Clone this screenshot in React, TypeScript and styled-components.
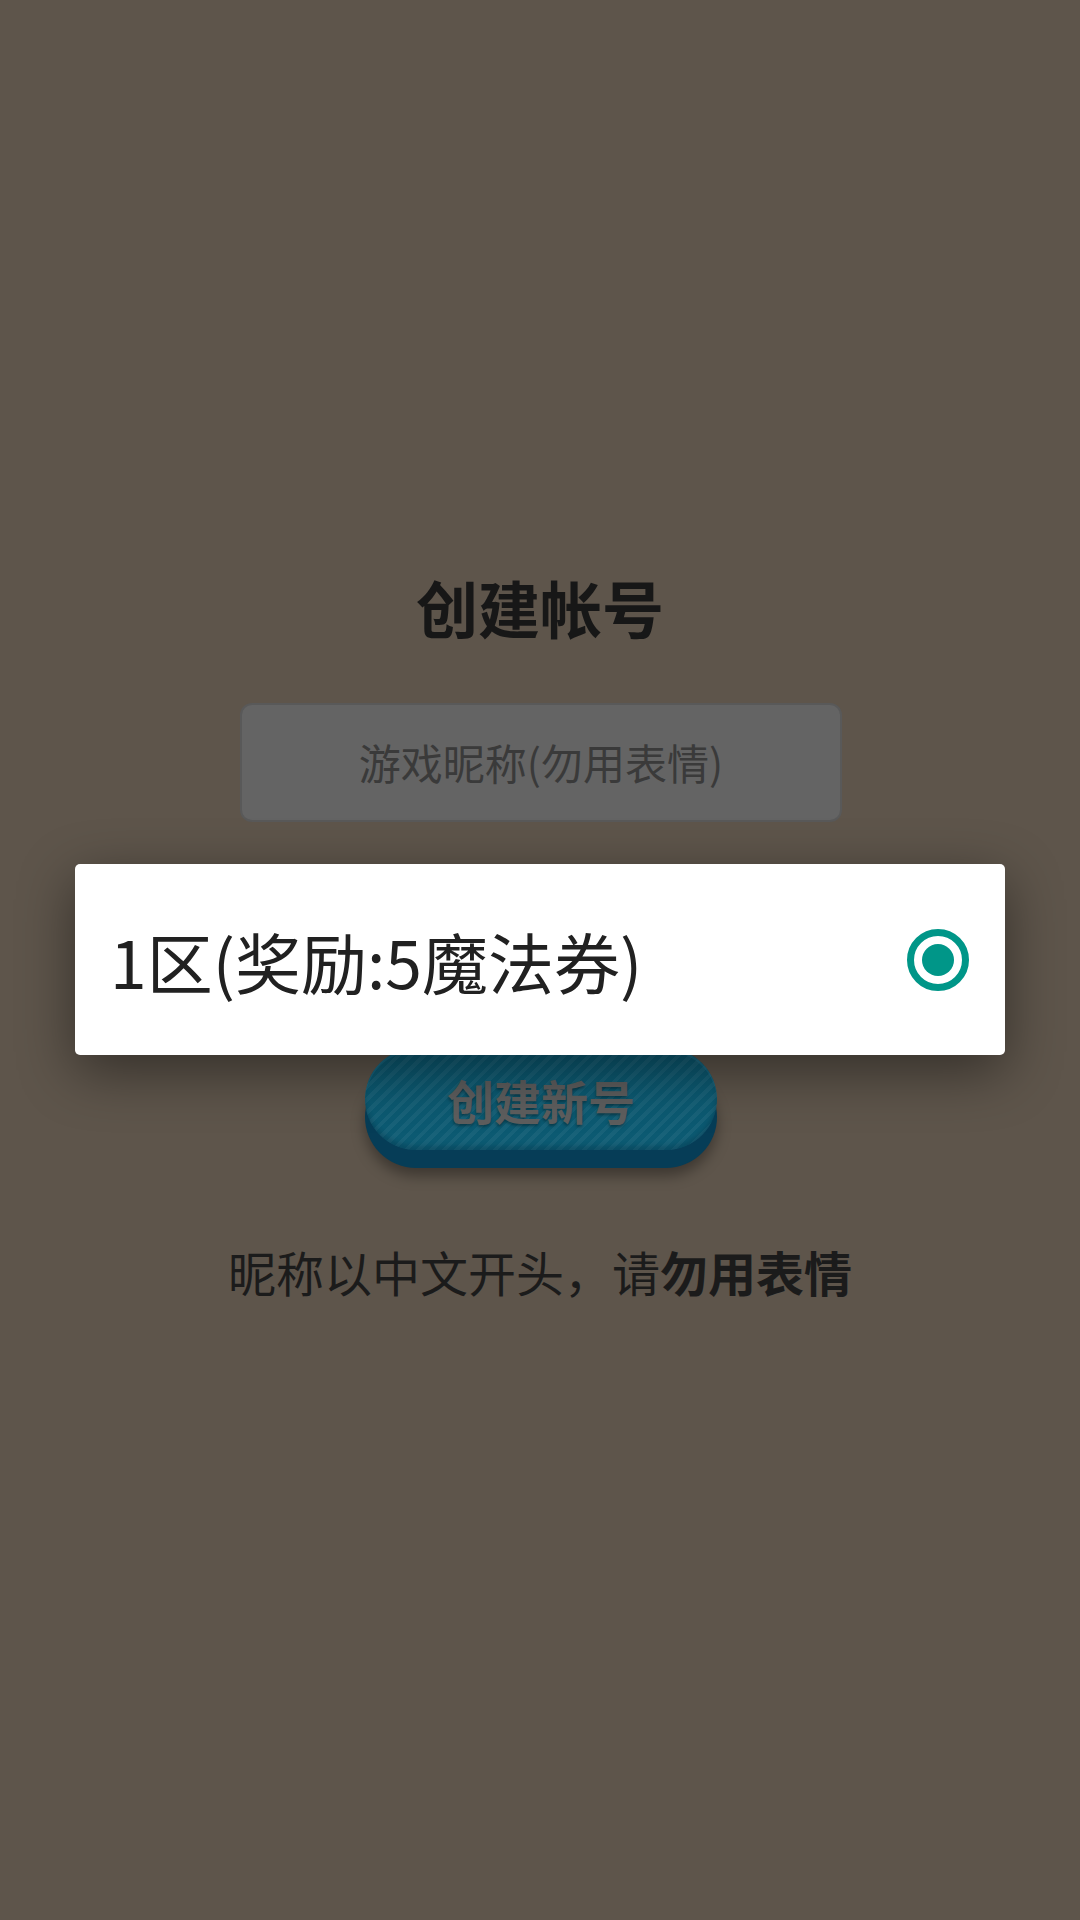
import React, { useState } from 'react'
import styled, { createGlobalStyle } from 'styled-components'

const GlobalStyle = createGlobalStyle`
    html, body {
        margin: 0;
        padding: 0;
        background: #5e554b;
    }
    * {
        box-sizing: border-box;
    }
`

const FONT = `"Noto Sans CJK SC", "Noto Sans", sans-serif`

const Page = styled.div`
    width: 1080px;
    min-height: 1920px;
    background: #5e554b;
    display: flex;
    flex-direction: column;
    align-items: center;
    padding-top: 570px;
    font-family: ${FONT};
`

const Title = styled.h1`
    margin: 0 0 59px;
    font-size: 62px;
    line-height: 74px;
    font-weight: 700;
    color: #171717;
`

const NameInput = styled.input`
    width: 602px;
    height: 119px;
    margin-left: 2px;
    border: 2px solid #595959;
    border-radius: 12px;
    background: #646464;
    font-family: ${FONT};
    font-size: 42px;
    text-align: center;
    color: #222;
    outline: none;
    padding-bottom: 4px;

    &::placeholder {
        color: #3a3a3a;
    }
`

const CreateButton = styled.button`
    margin-top: 226px;
    width: 352px;
    height: 102px;
    margin-left: 2px;
    border: none;
    border-radius: 51px;
    background-color: #0c5a72;
    background-image: repeating-linear-gradient(
        135deg,
        rgba(255, 255, 255, 0.05) 0 4px,
        rgba(0, 0, 0, 0) 4px 9px
    );
    box-shadow:
        inset 0 3px 0 rgba(40, 130, 160, 0.35),
        inset 0 -4px 4px rgba(0, 30, 50, 0.25),
        0 18px 0 #063d57,
        0 26px 14px rgba(0, 0, 0, 0.35);
    font-family: ${FONT};
    font-size: 47px;
    font-weight: 700;
    color: #5e5e5e;
    text-shadow: 0 2px 3px rgba(0, 0, 0, 0.35);
    cursor: pointer;
`

const Hint = styled.p`
    margin: 90px 0 0;
    font-size: 48px;
    line-height: 62px;
    color: #1b1b1b;

    b {
        font-weight: 700;
    }
`

const Dialog = styled.div`
    position: fixed;
    top: 864px;
    left: 75px;
    width: 930px;
    height: 191px;
    background: #fff;
    border-radius: 5px;
    box-shadow: 0 16px 56px rgba(0, 0, 0, 0.45);
    display: flex;
    align-items: center;
    justify-content: space-between;
    padding: 0 36px 0 35px;
`

const OptionLabel = styled.span`
    font-family: ${FONT};
    font-size: 66px;
    color: #212121;
`

const Radio = styled.span<{ checked: boolean }>`
    width: 62px;
    height: 62px;
    border-radius: 50%;
    border: 7px solid #009688;
    display: flex;
    align-items: center;
    justify-content: center;

    &::after {
        content: '';
        width: 32px;
        height: 32px;
        border-radius: 50%;
        background: ${({ checked }) => (checked ? '#009688' : 'transparent')};
    }
`

export default function App() {
    const [nickname, setNickname] = useState('')
    const [server] = useState(1)

    return (
        <>
            <GlobalStyle />
            <Page>
                <Title>创建帐号</Title>
                <NameInput
                    value={nickname}
                    placeholder="游戏昵称(勿用表情)"
                    onChange={e => setNickname(e.target.value)}
                />
                <CreateButton>创建新号</CreateButton>
                <Hint>
                    昵称以中文开头，请<b>勿用表情</b>
                </Hint>
            </Page>

            <Dialog>
                <OptionLabel>1区(奖励:5魔法券)</OptionLabel>
                <Radio checked={server === 1} />
            </Dialog>
        </>
    )
}
